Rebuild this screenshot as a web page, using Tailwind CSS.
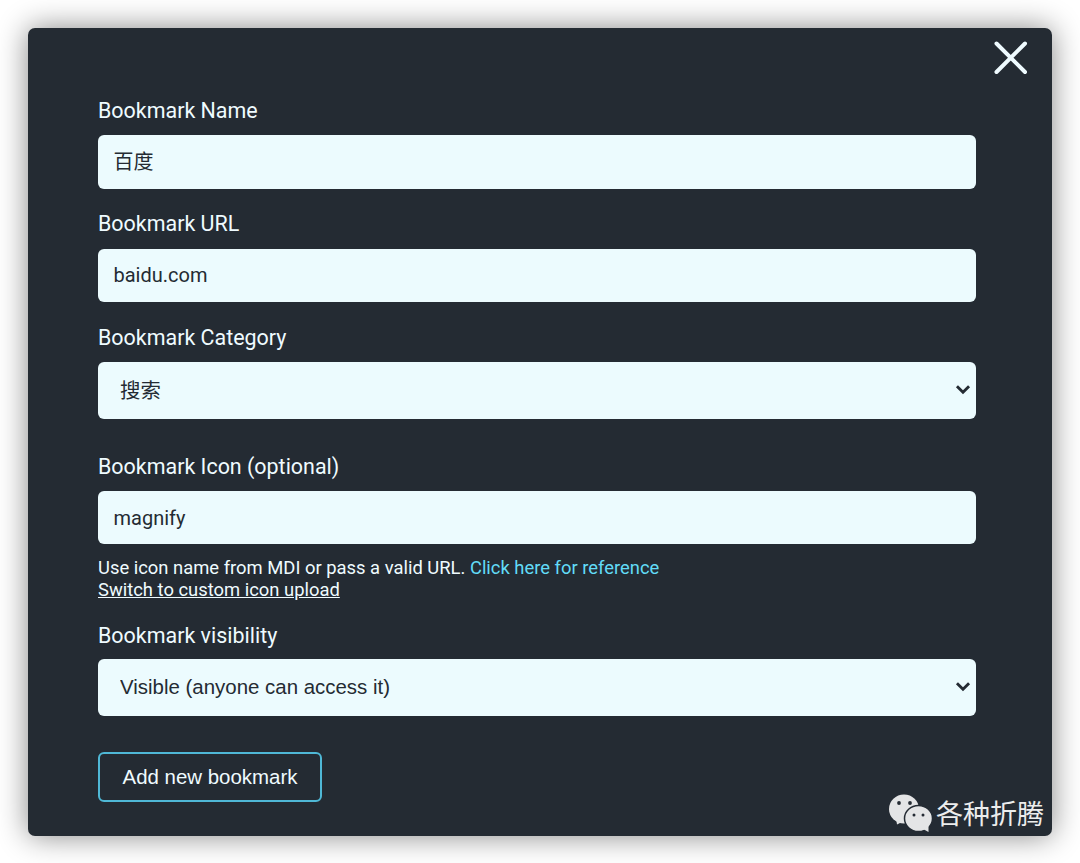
<!DOCTYPE html>
<html lang="zh">
<head>
<meta charset="utf-8">
<script src="https://cdn.jsdelivr.net/npm/@tailwindcss/browser@4"></script>
<title>Add bookmark</title>
</head>
<body class="bg-white w-[1080px] h-[863px] overflow-hidden font-['Roboto','Noto_Sans_CJK_SC',sans-serif]">
<div class="pt-[28px] pl-[28px]">
  <div class="relative w-[1024px] h-[808px] bg-[#242b33] rounded-[7px] shadow-[0_0_30px_rgba(0,0,0,0.48)] pl-[70px] pr-[76px] pt-[70px]">
    <button class="absolute top-[13px] right-[24px] w-[34px] h-[34px]" aria-label="Close">
      <svg viewBox="0 0 34 34" class="w-[34px] h-[34px]" fill="none" stroke="#effbff" stroke-width="4" stroke-linecap="round"><path d="M2.5 2.5 L31 31 M31 2.5 L2.5 31"/></svg>
    </button>
    <form class="flex flex-col">
      <label class="h-[37px] text-[21.45px] leading-[26px] text-[#effbff]">Bookmark Name</label>
      <input value="百度" class="h-[54px] rounded-[6px] bg-[#ecfbfe] pl-[15.5px] pr-[16px] pb-[3px] text-[20px] text-[#242b33] font-['Roboto','Noto_Sans_CJK_SC',sans-serif]">
      <label class="mt-[22px] h-[38px] text-[21.45px] leading-[26px] text-[#effbff]">Bookmark URL</label>
      <input value="baidu.com" class="h-[53px] rounded-[6px] bg-[#ecfbfe] pl-[15.5px] pr-[16px] pb-[2px] text-[20px] text-[#242b33]">
      <label class="mt-[23px] h-[37px] text-[21.45px] leading-[26px] text-[#effbff]">Bookmark Category</label>
      <div class="relative h-[57px]">
        <select class="appearance-none w-full h-full rounded-[6px] bg-[#ecfbfe] pl-[22px] pt-[2px] text-[20.45px] text-[#242b33] font-['Liberation_Sans','Noto_Sans_CJK_SC',sans-serif]"><option>搜索</option></select>
        <svg viewBox="0 0 14 10" class="absolute right-[5px] top-[22px] w-[16px] h-[11px] pointer-events-none" fill="none" stroke="#242b33" stroke-width="2.6"><path d="M1.5 2 L7 7.5 L12.5 2"/></svg>
      </div>
      <label class="mt-[35px] h-[37px] text-[21.45px] leading-[26px] text-[#effbff]">Bookmark Icon (optional)</label>
      <input value="magnify" class="h-[53px] rounded-[6px] bg-[#ecfbfe] pl-[15.5px] pr-[16px] text-[20px] text-[#242b33]">
      <p class="mt-[13px] text-[18.4px] leading-[21.5px] text-[#effbff]">Use icon name from MDI or pass a valid URL. <a class="text-[#62dcf8]">Click here for reference</a><br><span class="underline">Switch to custom icon upload</span></p>
      <label class="mt-[23px] h-[36px] text-[21.45px] leading-[26px] text-[#effbff]">Bookmark visibility</label>
      <div class="relative h-[57px]">
        <select class="appearance-none w-full h-full rounded-[6px] bg-[#ecfbfe] pl-[22px] text-[20.45px] text-[#242b33] font-['Liberation_Sans',sans-serif]"><option>Visible (anyone can access it)</option></select>
        <svg viewBox="0 0 14 10" class="absolute right-[5px] top-[22px] w-[16px] h-[11px] pointer-events-none" fill="none" stroke="#242b33" stroke-width="2.6"><path d="M1.5 2 L7 7.5 L12.5 2"/></svg>
      </div>
      <button type="button" class="mt-[36px] w-[224px] h-[50px] rounded-[6px] border-2 border-[#4fb8d6] text-[20.45px] text-[#effbff] font-['Liberation_Sans',sans-serif]">Add new bookmark</button>
    </form>
    <div class="absolute right-[8px] bottom-[4px] flex items-center gap-[3px]">
      <svg viewBox="0 0 44 38" class="w-[44px] h-[38px]">
        <ellipse cx="15" cy="15" rx="15" ry="14.5" fill="#e4e5e6"/>
        <path fill="#e4e5e6" d="M7 24 L8 30.500 L15 27z"/>
        <ellipse cx="29.500" cy="24.500" rx="14" ry="13" fill="#e4e5e6" stroke="#242b33" stroke-width="1.500"/>
        <path fill="#e4e5e6" d="M34 35 L39.500 38 L39.500 32z"/>
        <circle cx="10" cy="9" r="1.900" fill="#242b33"/><circle cx="21" cy="9" r="1.900" fill="#242b33"/>
        <circle cx="25" cy="21" r="1.500" fill="#242b33"/><circle cx="34" cy="21" r="1.500" fill="#242b33"/>
      </svg>
      <span class="text-[27px] leading-[34px] text-[#eceded] font-['Noto_Sans_CJK_SC',sans-serif]">各种折腾</span>
    </div>
  </div>
</div>
</body>
</html>
